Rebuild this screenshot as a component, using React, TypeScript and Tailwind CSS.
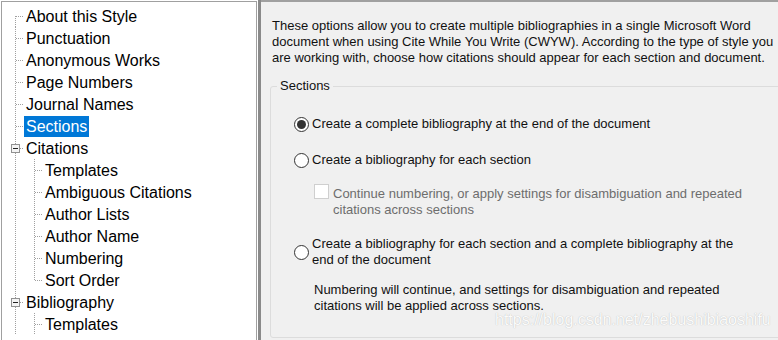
import React from 'react'

type Guide = 'top' | 'tee' | 'ell' | 'pipe' | 'minus' | 'none'

const dot = { stroke: '#a0a0a0', strokeWidth: 1, strokeDasharray: '1 1' }

const GuideCell = ({ kind }: { kind: Guide }) => (
  <svg width="19" height="22" className="shrink-0 block">
    {(kind === 'tee' || kind === 'pipe' || kind === 'minus') && <line x1="10.5" y1="0" x2="10.5" y2="22" {...dot} />}
    {kind === 'ell' && <line x1="10.5" y1="0" x2="10.5" y2="11" {...dot} />}
    {kind === 'top' && <line x1="10.5" y1="11" x2="10.5" y2="22" {...dot} />}
    {(kind === 'tee' || kind === 'ell' || kind === 'top') && <line x1="11" y1="11.5" x2="19" y2="11.5" {...dot} />}
    {kind === 'minus' && (
      <>
        <line x1="15" y1="11.5" x2="19" y2="11.5" {...dot} />
        <rect x="6.5" y="7.5" width="8" height="8" fill="#f4f4f4" stroke="#919191" />
        <line x1="8" y1="11.5" x2="13" y2="11.5" stroke="#222" />
      </>
    )}
  </svg>
)

const tree: { label: string; guides: Guide[]; selected?: boolean }[] = [
  { label: 'About this Style', guides: ['top'] },
  { label: 'Punctuation', guides: ['tee'] },
  { label: 'Anonymous Works', guides: ['tee'] },
  { label: 'Page Numbers', guides: ['tee'] },
  { label: 'Journal Names', guides: ['tee'] },
  { label: 'Sections', guides: ['tee'], selected: true },
  { label: 'Citations', guides: ['minus'] },
  { label: 'Templates', guides: ['pipe', 'tee'] },
  { label: 'Ambiguous Citations', guides: ['pipe', 'tee'] },
  { label: 'Author Lists', guides: ['pipe', 'tee'] },
  { label: 'Author Name', guides: ['pipe', 'tee'] },
  { label: 'Numbering', guides: ['pipe', 'tee'] },
  { label: 'Sort Order', guides: ['pipe', 'ell'] },
  { label: 'Bibliography', guides: ['minus'] },
  { label: 'Templates', guides: ['pipe', 'tee'] },
]

const Radio = ({ checked }: { checked?: boolean }) => (
  <span className="w-[15px] h-[15px] rounded-full border border-[#333] bg-white flex items-center justify-center shrink-0">
    {checked && <span className="w-[9px] h-[9px] rounded-full bg-[#333]" />}
  </span>
)

const App = () => {
  return (
    <div className="w-[778px] h-[340px] bg-white flex overflow-hidden font-['Liberation_Sans',Arial,sans-serif]">
      <div className="w-[256px] h-[342px] mt-[1px] ml-[1px] border border-[#a0a0a0] bg-white pt-[3px] pl-[3px] shrink-0">
        {tree.map((item, i) => (
          <div key={i} className="flex h-[22px] items-center">
            {item.guides.map((g, j) => (
              <GuideCell key={j} kind={g} />
            ))}
            <span
              className={`px-[2px] h-[21px] leading-[21px] text-[16px] ${
                item.selected ? 'bg-[#0078d7] text-white' : 'text-black'
              }`}
            >
              {item.label}
            </span>
          </div>
        ))}
      </div>
      <div className="ml-[1px] w-[3px] h-[340px] bg-[#8a8a8a] shrink-0" />
      <div className="flex-1 min-w-0 h-[340px] bg-[#f0f0f0] border-t-2 border-[#a0a0a0] pl-[11px] pt-[16px] text-[13px] text-[#111] leading-[16px] relative">
        <p className="whitespace-nowrap">
          These options allow you to create multiple bibliographies in a single Microsoft Word
          <br />
          document when using Cite While You Write (CWYW). According to the type of style you
          <br />
          are working with, choose how citations should appear for each section and document.
        </p>
        <fieldset className="mt-[12px] ml-[-2px] border border-[#dcdcdc] rounded-[3px] w-[540px] h-[260px] pl-[23px]">
          <legend className="ml-[-17px] px-[3px] text-[#111]">Sections</legend>
          <div className="flex items-center gap-[3px] mt-[22px]">
            <Radio checked />
            <span>Create a complete bibliography at the end of the document</span>
          </div>
          <div className="flex items-center gap-[3px] mt-[20px]">
            <Radio />
            <span>Create a bibliography for each section</span>
          </div>
          <div className="flex items-start gap-[4px] mt-[18px] ml-[20px]">
            <span className="w-[15px] h-[15px] border border-[#cfcfcf] bg-white shrink-0 mt-[-2px]" />
            <span className="text-[#6d6d6d] w-[430px]">
              Continue numbering, or apply settings for disambiguation and repeated citations across sections
            </span>
          </div>
          <div className="flex items-center gap-[3px] mt-[18px]">
            <Radio />
            <span className="w-[440px]">
              Create a bibliography for each section and a complete bibliography at the end of the document
            </span>
          </div>
          <p className="mt-[14px] ml-[20px] w-[430px]">
            Numbering will continue, and settings for disambiguation and repeated citations will be applied across sections.
          </p>
        </fieldset>
        <span className="absolute left-[234px] top-[310px] text-[16px] text-[#fbfbfb] [text-shadow:0_0_1px_#b0b0b0]">
          https://blog.csdn.net/zhebushibiaoshifu
        </span>
      </div>
    </div>
  )
}

export default App
